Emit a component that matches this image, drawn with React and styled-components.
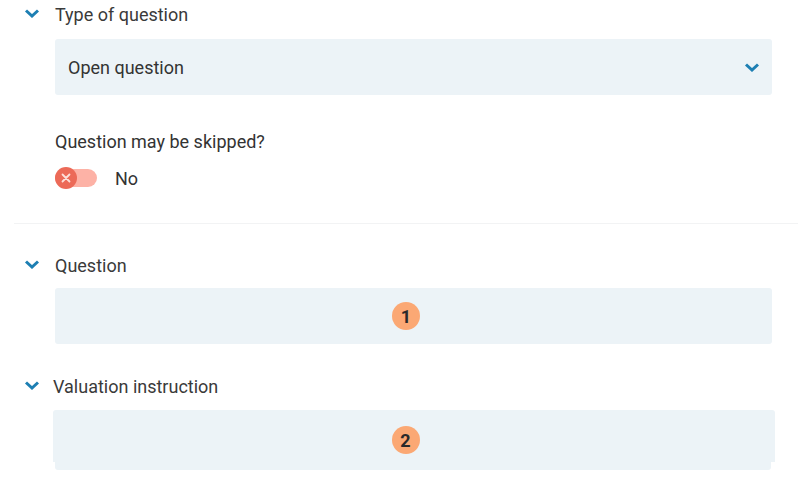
import React from "react";
import styled, { createGlobalStyle } from "styled-components";

const Global = createGlobalStyle`
  html, body { margin: 0; padding: 0; background: #fff; }
  body { font-family: Roboto, "Noto Sans", sans-serif; color: #333; }
`;

const Page = styled.div`
  width: 801px;
  height: 481px;
  overflow: hidden;
  box-sizing: border-box;
`;

const Section = styled.section`
  padding: 0 29px 0 55px;
  margin-top: ${(p) => p.$top ?? 0}px;
`;

const Heading = styled.div`
  position: relative;
  height: 28px;
  display: flex;
  align-items: center;
  font-size: 18px;
  color: #3a3a3a;
  margin-left: ${(p) => p.$shift ?? 0}px;
`;

const Caret = styled.svg`
  position: absolute;
  left: ${(p) => -31 - (p.$shift ?? 0)}px;
  top: 50%;
  margin-top: -5px;
  width: 16px;
  height: 9px;
`;

const HeadingCaret = ({ shift }) => (
  <Caret viewBox="0 0 16 9" $shift={shift}>
    <path d="M2 1.5l6 5.5 6-5.5" fill="none" stroke="#1d7fb3" strokeWidth="3" />
  </Caret>
);

const Chevron = () => (
  <svg width="16" height="9" viewBox="0 0 16 9">
    <path d="M2 1.5l6 5.5 6-5.5" fill="none" stroke="#1d7fb3" strokeWidth="3" />
  </svg>
);

const Field = styled.div`
  position: relative;
  margin-top: ${(p) => p.$top ?? 9}px;
  height: ${(p) => p.$h ?? 56}px;
  width: ${(p) => p.$w ?? 717}px;
  background: #ecf3f7;
  border-radius: 3px;
  display: flex;
  align-items: center;
  justify-content: ${(p) => (p.$center ? "center" : "space-between")};
  padding: ${(p) => (p.$center ? "0 15px 0 0" : "0 12px 0 13px")};
  font-size: 18px;
  color: #333;
  box-sizing: border-box;
`;

/* editor surface sits over the lower field, a little wider and shorter */
const EditorField = styled(Field)`
  &::before {
    content: "";
    position: absolute;
    left: -2px;
    right: -4px;
    top: 0;
    bottom: 8px;
    background: #ecf3f7;
    border-radius: 3px 3px 0 0;
  }
`;

const Label = styled.div`
  margin-top: 36px;
  font-size: 18px;
  color: #333;
  height: 22px;
  line-height: 22px;
`;

const ToggleRow = styled.div`
  margin-top: 14px;
  display: flex;
  align-items: center;
  gap: 18px;
  font-size: 18px;
  color: #333;
  height: 22px;
`;

const Track = styled.div`
  position: relative;
  width: 42px;
  height: 18px;
  border-radius: 9px;
  background: #fdb2a6;
`;

const Knob = styled.div`
  position: absolute;
  left: 0;
  top: -2px;
  width: 22px;
  height: 22px;
  border-radius: 50%;
  background: #ec6a58;
  display: flex;
  align-items: center;
  justify-content: center;
`;

const Divider = styled.hr`
  margin: 34px 3px 0 14px;
  border: 0;
  border-top: 1px solid #f2f3f4;
  height: 0;
`;

const Badge = styled.span`
  position: relative;
  width: 28px;
  height: 28px;
  border-radius: 50%;
  background: #fba874;
  color: #2a2a2a;
  font-weight: 700;
  font-size: 18px;
  display: flex;
  align-items: center;
  justify-content: center;
`;

export default function App() {
  return (
    <Page>
      <Global />
      <Section>
        <Heading>
          <HeadingCaret />
          Type of question
        </Heading>
        <Field $top={11}>
          <span>Open question</span>
          <Chevron />
        </Field>
        <Label>Question may be skipped?</Label>
        <ToggleRow>
          <Track>
            <Knob>
              <svg width="10" height="10" viewBox="0 0 10 10">
                <path d="M1.5 1.5l7 7M8.5 1.5l-7 7" stroke="#fde0da" strokeWidth="1.8" strokeLinecap="round" />
              </svg>
            </Knob>
          </Track>
          <span>No</span>
        </ToggleRow>
      </Section>
      <Divider />
      <Section $top={27}>
        <Heading>
          <HeadingCaret />
          Question
        </Heading>
        <Field $top={9} $center>
          <Badge>1</Badge>
        </Field>
      </Section>
      <Section $top={28}>
        <Heading $shift={-2}>
          <HeadingCaret shift={-2} />
          Valuation instruction
        </Heading>
        <EditorField $top={10} $h={60} $w={716} $center>
          <Badge>2</Badge>
        </EditorField>
      </Section>
    </Page>
  );
}
